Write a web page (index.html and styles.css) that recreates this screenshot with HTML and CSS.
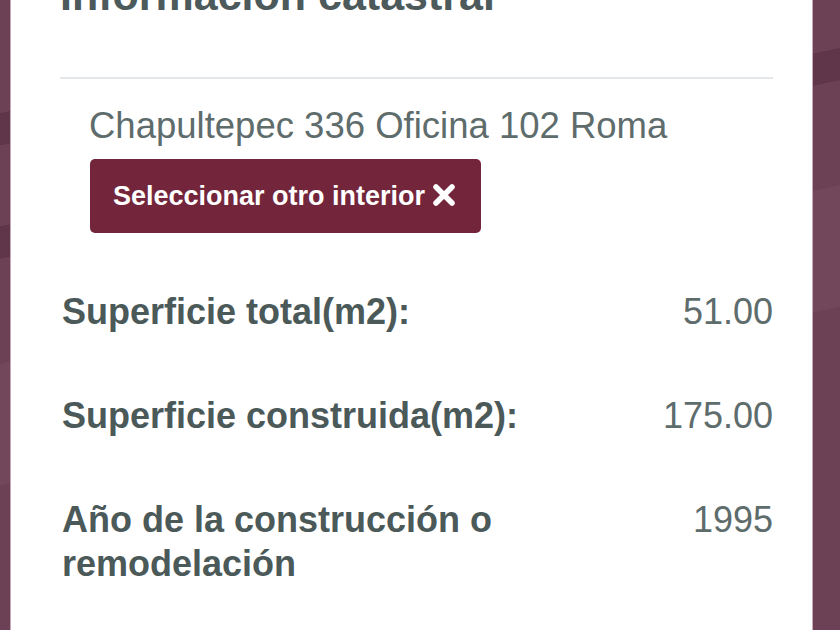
FILE: index.html
```html
<!DOCTYPE html>
<html lang="es">
<head>
<meta charset="utf-8">
<title>Información catastral</title>
<link rel="stylesheet" href="styles.css">
</head>
<body>
<main class="panel">
  <h2 class="title">Información catastral</h2>
  <hr class="divider">
  <section class="selection">
    <p class="address">Chapultepec 336 Oficina 102 Roma</p>
    <button class="btn-change" type="button">
      <span>Seleccionar otro interior</span>
      <svg class="icon-x" viewBox="0 0 26 26" width="26" height="26" aria-hidden="true">
        <path d="M5 5 L21 21 M21 5 L5 21" stroke="#fff" stroke-width="5.5" stroke-linecap="round" fill="none"/>
      </svg>
    </button>
  </section>
  <dl class="details">
    <div class="row">
      <dt class="label">Superficie total(m2):</dt>
      <dd class="value">51.00</dd>
    </div>
    <div class="row">
      <dt class="label">Superficie construida(m2):</dt>
      <dd class="value">175.00</dd>
    </div>
    <div class="row">
      <dt class="label">Año de la construcción o remodelación</dt>
      <dd class="value">1995</dd>
    </div>
  </dl>
</main>
</body>
</html>
```
FILE: styles.css
```css
html, body {
  margin: 0;
  height: 630px;
  overflow: hidden;
}

body {
  background-color: #6c4055;
  background-image:
    linear-gradient(168deg,
      transparent 0 14%,
      rgba(40, 5, 20, 0.18) 14% 18%,
      transparent 18% 28%,
      rgba(40, 5, 20, 0.18) 28% 32%,
      transparent 32% 45%,
      rgba(255, 255, 255, 0.04) 45% 60%,
      transparent 60% 100%);
  font-family: "Liberation Sans", Arial, sans-serif;
}

.panel {
  display: flow-root;
  box-sizing: border-box;
  margin-left: 11px;
  width: 801px;
  height: 630px;
  background: #fff;
  padding: 0 39px 0 49px;
  box-shadow: -1px 0 0 #c7aab7, 1px 0 0 #c7aab7;
}

.title {
  margin: -31px 0 0;
  font-size: 43px;
  line-height: 52px;
  font-weight: bold;
  color: #4d5a5b;
}

.divider {
  margin: 56px 0 0;
  border: 0;
  height: 2px;
  background: #e4e7e9;
}

.selection {
  padding: 25px 0 0 30px;
}

.address {
  margin: 0 0 11px -1px;
  font-size: 36.5px;
  line-height: 44px;
  color: #5e6c6c;
}

.btn-change {
  display: inline-flex;
  align-items: center;
  gap: 6px;
  height: 74px;
  padding: 0 24px 0 23px;
  border: 0;
  border-radius: 5px;
  background: #73263b;
  color: #fff;
  font-family: "Liberation Sans", Arial, sans-serif;
  font-size: 27px;
  font-weight: bold;
  cursor: pointer;
}

.icon-x {
  display: block;
  margin-top: -2px;
}

.details {
  margin: 57px 0 0;
  padding: 0 0 0 2px;
  display: flex;
  flex-direction: column;
  gap: 60px;
}

.row {
  display: flex;
  justify-content: space-between;
  align-items: flex-start;
  font-size: 36px;
  line-height: 44px;
}

.label {
  max-width: 470px;
  font-weight: bold;
  color: #4b5959;
}

.value {
  margin: 0;
  color: #5e6c6c;
}
```
